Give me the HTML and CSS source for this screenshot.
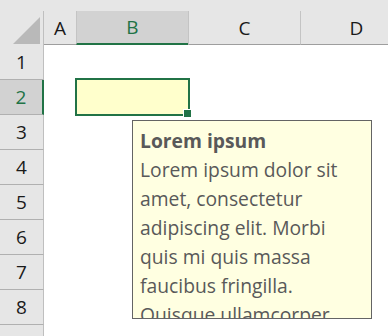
FILE: index.html
```html
<!DOCTYPE html>
<html>
<head>
<meta charset="utf-8">
<link rel="stylesheet" href="styles.css">
</head>
<body>
<div class="sheet">
  <div class="corner"><div class="corner-in"><svg width="27" height="27" viewBox="0 0 27 27"><polygon points="0,27 27,27 27,0" fill="#b9b9b9"/></svg></div></div>
  <div class="colhead"><div class="lbl first">A</div></div>
  <div class="colhead sel"><div class="lbl">B</div></div>
  <div class="colhead"><div class="lbl">C</div></div>
  <div class="colhead"><div class="lbl">D</div></div>

  <div class="rowhead">1</div><div class="cell"></div><div class="cell"></div><div class="cell"></div><div class="cell"></div>
  <div class="rowhead sel">2</div><div class="cell"></div><div class="cell yellow"></div><div class="cell"></div><div class="cell"></div>
  <div class="rowhead">3</div><div class="cell"></div><div class="cell"></div><div class="cell"></div><div class="cell"></div>
  <div class="rowhead">4</div><div class="cell"></div><div class="cell"></div><div class="cell"></div><div class="cell"></div>
  <div class="rowhead">5</div><div class="cell"></div><div class="cell"></div><div class="cell"></div><div class="cell"></div>
  <div class="rowhead">6</div><div class="cell"></div><div class="cell"></div><div class="cell"></div><div class="cell"></div>
  <div class="rowhead">7</div><div class="cell"></div><div class="cell"></div><div class="cell"></div><div class="cell"></div>
  <div class="rowhead">8</div><div class="cell"></div><div class="cell"></div><div class="cell"></div><div class="cell"></div>
  <div class="rowhead">9</div><div class="cell"></div><div class="cell"></div><div class="cell"></div><div class="cell"></div>

  <div class="selection"></div>
  <div class="handle"></div>
  <div class="comment">
    <div class="ctitle">Lorem ipsum</div>
    <div class="ctext">Lorem ipsum dolor sit<br>amet, consectetur<br>adipiscing elit. Morbi<br>quis mi quis massa<br>faucibus fringilla.<br>Quisque ullamcorper<br>nunc at lorem.</div>
  </div>
</div>
</body>
</html>
```

FILE: styles.css
```css
html, body {
  margin: 0;
  padding: 0;
  background: #ffffff;
}
.sheet {
  position: relative;
  width: 388px;
  height: 336px;
  overflow: hidden;
  display: grid;
  grid-template-columns: 44px 32px 112px 112px 112px;
  grid-template-rows: 45px;
  grid-auto-rows: 35px;
  font-family: "Open Sans", "Noto Sans", sans-serif;
  background: #ffffff;
}
.corner {
  background: #e6e6e6;
  padding-top: 11px;
}
.corner-in {
  height: 33px;
  border-right: 1px solid #bfbfbf;
  border-bottom: 1px solid #9e9e9e;
  display: flex;
  justify-content: flex-end;
  align-items: flex-end;
  padding: 0 3px 4px 0;
  box-sizing: content-box;
}
.corner-in svg {
  display: block;
}
.colhead {
  background: #e6e6e6;
  padding-top: 11px;
}
.lbl {
  height: 33px;
  border-left: 1px solid #c4c4c4;
  border-bottom: 1px solid #9e9e9e;
  display: flex;
  align-items: center;
  justify-content: center;
  font-size: 19px;
  color: #1a1a1a;
}
.lbl.first {
  border-left: none;
}
.colhead.sel .lbl {
  background: #d2d2d2;
  color: #217346;
  height: 32px;
  border-bottom: 2px solid #217346;
}
.rowhead {
  background: #e6e6e6;
  border-right: 1px solid #bfbfbf;
  border-bottom: 1px solid #b0b0b0;
  display: flex;
  align-items: center;
  justify-content: center;
  font-size: 19px;
  color: #1a1a1a;
}
.rowhead.sel {
  background: #d2d2d2;
  color: #217346;
  border-right: 2px solid #217346;
}
.cell {
  background: #ffffff;
}
.cell.yellow {
  background: #ffffcc;
}
.selection {
  position: absolute;
  left: 75px;
  top: 78px;
  width: 115px;
  height: 38px;
  box-sizing: border-box;
  border: 2px solid #217346;
  background: #ffffcc;
}
.handle {
  position: absolute;
  left: 183px;
  top: 109px;
  width: 7px;
  height: 7px;
  background: #217346;
  border-left: 1px solid #ffffff;
  border-top: 1px solid #ffffff;
}
.comment {
  position: absolute;
  left: 132px;
  top: 120px;
  width: 240px;
  height: 199px;
  box-sizing: border-box;
  border: 1px solid #646464;
  background: #ffffe1;
  overflow: hidden;
  padding: 5px 7px 0 7px;
  color: #595959;
  font-size: 19.3px;
  line-height: 29px;
  font-family: "Open Sans", "Noto Sans", sans-serif;
}
.ctitle {
  font-weight: 700;
}
.ctext {
  white-space: nowrap;
}
```
